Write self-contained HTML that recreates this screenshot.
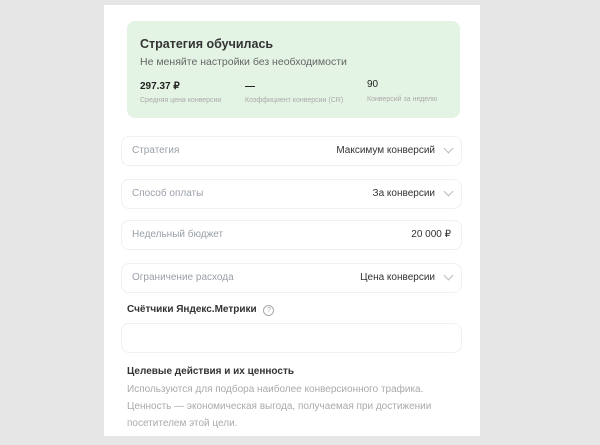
<!DOCTYPE html><html><head><meta charset="utf-8"><style>
body{margin:0;width:600px;height:445px;background:#e6e6e6;font-family:"Liberation Sans",sans-serif;position:relative;overflow:hidden}
.p{position:absolute;left:104px;top:5px;width:376px;height:431px;background:#fff}
.a{position:absolute}
.card{left:127px;top:21px;width:333px;height:97px;background:#e3f3e4;border-radius:8px}
.f{left:121px;width:339px;height:28px;border:1px solid #eef0f4;border-radius:8px;background:#fff}
.f .l{position:absolute;left:10px;top:8px;font-size:10px;color:#9aa0a8}
.f .r{position:absolute;right:26px;top:8px;font-size:10px;color:#333}
.f .c{position:absolute;right:9px;top:8px;width:6px;height:6px;border-right:1px solid #bbb;border-bottom:1px solid #bbb;transform:rotate(45deg)}
</style></head><body>
<div class="p"></div>
<div class="a card"></div>
<div class="a" style="left:140px;top:37px;font-size:12.5px;font-weight:bold;color:#333">Стратегия обучилась</div>
<div class="a" style="left:140px;top:56px;font-size:10.5px;color:#666">Не меняйте настройки без необходимости</div>
<div class="a" style="left:140px;top:81px;font-size:10px;font-weight:bold;color:#222">297.37 ₽</div>
<div class="a" style="left:245px;top:81px;font-size:10px;font-weight:bold;color:#222">—</div>
<div class="a" style="left:367px;top:79px;font-size:10px;color:#222">90</div>
<div class="a" style="left:140px;top:97px;font-size:7px;color:#aaa">Средняя цена конверсии</div>
<div class="a" style="left:245px;top:97px;font-size:7px;color:#aaa">Коэффициент конверсии (CR)</div>
<div class="a" style="left:367px;top:96px;font-size:7px;color:#aaa">Конверсий за неделю</div>
<div class="a f" style="top:136px"><span class="l">Стратегия</span><span class="r">Максимум конверсий</span><span class="c"></span></div>
<div class="a f" style="top:179px"><span class="l">Способ оплаты</span><span class="r">За конверсии</span><span class="c"></span></div>
<div class="a f" style="top:220px"><span class="l">Недельный бюджет</span><span class="r" style="right:10px">20 000 ₽</span></div>
<div class="a f" style="top:263px"><span class="l">Ограничение расхода</span><span class="r">Цена конверсии</span><span class="c"></span></div>
<div class="a" style="left:127px;top:304px;font-size:10px;font-weight:bold;color:#333">Счётчики Яндекс.Метрики <span style="display:inline-block;width:9px;height:9px;border:1px solid #aaa;border-radius:50%;font-size:7px;color:#aaa;text-align:center;line-height:9px;font-weight:normal;margin-left:4px">?</span></div>
<div class="a f" style="top:323px;height:28px"></div>
<div class="a" style="left:127px;top:366px;font-size:10px;font-weight:bold;color:#333">Целевые действия и их ценность</div>
<div class="a" style="left:127px;top:381px;font-size:10px;color:#aaa;line-height:17px;width:340px">Используются для подбора наиболее конверсионного трафика. Ценность — экономическая выгода, получаемая при достижении посетителем этой цели.</div>
</body></html>
